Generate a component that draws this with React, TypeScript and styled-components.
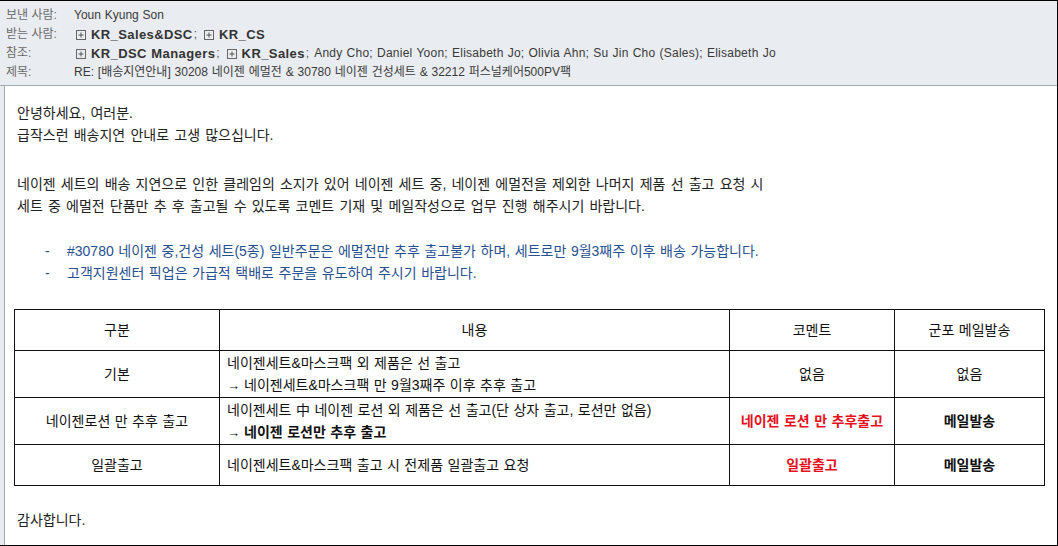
import React from 'react';
import styled, { createGlobalStyle } from 'styled-components';

const Global = createGlobalStyle`
  html, body { margin: 0; padding: 0; background: #fff; }
  body { font-family: "Liberation Sans", "Noto Sans CJK KR", sans-serif; }
  * { box-sizing: border-box; }
`;

const Window = styled.div`
  width: 1058px;
  height: 546px;
  border-top: 1px solid #000;
  border-right: 1px solid #000;
  border-bottom: 1px solid #000;
  background: #e9ecf0;
  display: flex;
  flex-direction: column;
  overflow: hidden;
`;

const Header = styled.header`
  height: 85px;
  flex: none;
  padding: 5px 0 3px 6px;
  border-bottom: 1px solid #a3abb3;
  display: flex;
  flex-direction: column;
`;

const HeaderRow = styled.div`
  display: grid;
  grid-template-columns: 68px 1fr;
  height: 19px;
  align-items: center;
  font-size: 12px;
  line-height: 19px;
  white-space: nowrap;
`;

const Label = styled.span`
  color: #6a6a6a;
`;

const Value = styled.span`
  color: #3a3a3a;
  word-spacing: 0.5px;
  display: flex;
  align-items: center;
`;

const Group = styled.span`
  display: inline-flex;
  align-items: center;
  margin-left: 2px;
  margin-right: 5px;
`;

const GroupName = styled.b`
  font-size: 13px;
  font-weight: 700;
  color: #333;
  margin-left: 5px;
  letter-spacing: 0.4px;
`;

const Sep = styled.span`
  color: #555;
  margin-left: 1px;
`;

const Plain = styled.span`
  white-space: pre;
  letter-spacing: 0.25px;
`;

const Body = styled.main`
  flex: 1;
  margin-left: 4px;
  border-left: 1px solid #9ea7b0;
  background: #fff;
  padding: 16px 0 0 9px;
  display: flex;
  flex-direction: column;
  color: #222;
  font-size: 14px;
  line-height: 22px;
`;

const Para = styled.p<{ $top?: number }>`
  margin: ${p => p.$top ?? 0}px 0 0 0;
  padding-left: 3px;
  word-spacing: 1.3px;
  white-space: nowrap;
`;

const Bullets = styled.ul<{ $top?: number }>`
  list-style: none;
  margin: ${p => p.$top ?? 0}px 0 0 0;
  padding: 0;
  color: #27508f;
`;

const Bullet = styled.li`
  display: flex;
  padding-left: 31px;
  word-spacing: 0.7px;
  white-space: nowrap;
`;

const Dash = styled.span`
  width: 22px;
  flex: none;
`;

const Table = styled.div<{ $top?: number }>`
  margin-top: ${p => p.$top ?? 0}px;
  width: 1031px;
  display: grid;
  grid-template-columns: 205px 510px 165px 150px;
  grid-template-rows: 41px 47px 47px 41px;
  border-left: 1px solid #111;
  border-top: 1px solid #111;
`;

const Cell = styled.div<{ $align?: 'left' | 'center' }>`
  border-right: 1px solid #111;
  border-bottom: 1px solid #111;
  display: flex;
  flex-direction: column;
  justify-content: center;
  align-items: ${p => (p.$align === 'left' ? 'flex-start' : 'center')};
  padding-left: ${p => (p.$align === 'left' ? '7px' : '0')};
  color: #111;
  word-spacing: 0.6px;
  white-space: nowrap;
`;

const Em = styled.span<{ $tone?: 'red' | 'black' }>`
  font-weight: 700;
  color: ${p => (p.$tone === 'red' ? '#e5121c' : '#111')};
`;

const Arrow = styled.span`
  font-size: 13px;
  font-weight: 400;
  margin-right: 4px;
`;

const BoxPlus = () => (
  <svg width="10" height="10" viewBox="0 0 10 10" aria-hidden="true">
    <rect x="0.5" y="0.5" width="9" height="9" fill="none" stroke="#666" strokeWidth="1" />
    <line x1="2.5" y1="5" x2="7.5" y2="5" stroke="#555" strokeWidth="1" />
    <line x1="5" y1="2.5" x2="5" y2="7.5" stroke="#555" strokeWidth="1" />
  </svg>
);

const DL = ({ name }: { name: string }) => (
  <Group>
    <BoxPlus />
    <GroupName>{name}</GroupName>
    <Sep>;</Sep>
  </Group>
);

export default function App() {
  return (
    <>
      <Global />
      <Window>
        <Header>
          <HeaderRow>
            <Label>보낸 사람:</Label>
            <Value>Youn Kyung Son</Value>
          </HeaderRow>
          <HeaderRow>
            <Label>받는 사람:</Label>
            <Value>
              <DL name="KR_Sales&DSC" />
              <Group>
                <BoxPlus />
                <GroupName>KR_CS</GroupName>
              </Group>
            </Value>
          </HeaderRow>
          <HeaderRow>
            <Label>참조:</Label>
            <Value>
              <DL name="KR_DSC Managers" />
              <DL name="KR_Sales" />
              <Plain>Andy Cho; Daniel Yoon; Elisabeth Jo; Olivia Ahn; Su Jin Cho (Sales); Elisabeth Jo</Plain>
            </Value>
          </HeaderRow>
          <HeaderRow>
            <Label>제목:</Label>
            <Value>RE: [배송지연안내] 30208 네이젠 에멀전 &amp; 30780 네이젠 건성세트 &amp; 32212 퍼스널케어500PV팩</Value>
          </HeaderRow>
        </Header>
        <Body>
          <Para>
            안녕하세요, 여러분.
            <br />
            급작스런 배송지연 안내로 고생 많으십니다.
          </Para>
          <Para $top={27}>
            네이젠 세트의 배송 지연으로 인한 클레임의 소지가 있어 네이젠 세트 중, 네이젠 에멀전을 제외한 나머지 제품 선 출고 요청 시
            <br />
            세트 중 에멀전 단품만 추 후 출고될 수 있도록 코멘트 기재 및 메일작성으로 업무 진행 해주시기 바랍니다.
          </Para>
          <Bullets $top={23}>
            <Bullet>
              <Dash>-</Dash>
              <span>#30780 네이젠 중,건성 세트(5종) 일반주문은 에멀전만 추후 출고불가 하며, 세트로만 9월3째주 이후 배송 가능합니다.</span>
            </Bullet>
            <Bullet>
              <Dash>-</Dash>
              <span>고객지원센터 픽업은 가급적 택배로 주문을 유도하여 주시기 바랍니다.</span>
            </Bullet>
          </Bullets>
          <Table $top={25}>
            <Cell>구분</Cell>
            <Cell>내용</Cell>
            <Cell>코멘트</Cell>
            <Cell>군포 메일발송</Cell>

            <Cell>기본</Cell>
            <Cell $align="left">
              <span>네이젠세트&amp;마스크팩 외 제품은 선 출고</span>
              <span>
                <Arrow>→</Arrow>네이젠세트&amp;마스크팩 만 9월3째주 이후 추후 출고
              </span>
            </Cell>
            <Cell>없음</Cell>
            <Cell>없음</Cell>

            <Cell>네이젠로션 만 추후 출고</Cell>
            <Cell $align="left">
              <span>네이젠세트 中 네이젠 로션 외 제품은 선 출고(단 상자 출고, 로션만 없음)</span>
              <Em $tone="black">
                <Arrow>→</Arrow>네이젠 로션만 추후 출고
              </Em>
            </Cell>
            <Cell>
              <Em $tone="red">네이젠 로션 만 추후출고</Em>
            </Cell>
            <Cell>
              <Em $tone="black">메일발송</Em>
            </Cell>

            <Cell>일괄출고</Cell>
            <Cell $align="left">네이젠세트&amp;마스크팩 출고 시 전제품 일괄출고 요청</Cell>
            <Cell>
              <Em $tone="red">일괄출고</Em>
            </Cell>
            <Cell>
              <Em $tone="black">메일발송</Em>
            </Cell>
          </Table>
          <Para $top={23}>감사합니다.</Para>
        </Body>
      </Window>
    </>
  );
}
